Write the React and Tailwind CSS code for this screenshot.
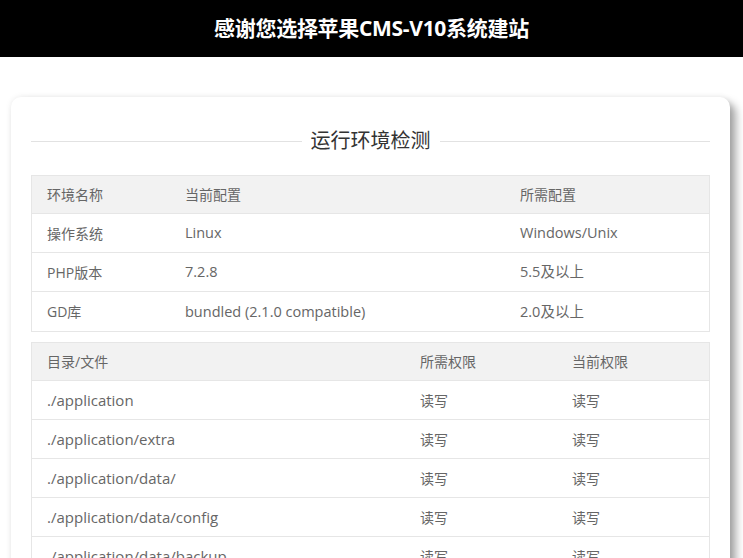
import React from "react";

const envRows = [
  ["操作系统", "Linux", "Windows/Unix"],
  ["PHP版本", "7.2.8", "5.5及以上"],
  ["GD库", "bundled (2.1.0 compatible)", "2.0及以上"],
];

const dirRows = [
  "./application",
  "./application/extra",
  "./application/data/",
  "./application/data/config",
  "./application/data/backup",
  "./application/data/update",
];

const App = () => {
  return (
    <div
      className="min-h-screen bg-white text-[#666]"
      style={{ fontFamily: '"Open Sans", "Noto Sans CJK SC", sans-serif' }}
    >
      {/* header */}
      <div className="h-[57px] bg-black flex items-center justify-center">
        <h1 className="text-white text-[21px] font-bold tracking-[-0.3px]">
          感谢您选择苹果CMS-V10系统建站
        </h1>
      </div>

      {/* card */}
      <div className="ml-[11px] mt-[40px] w-[719px] bg-white rounded-[10px] px-[20px] pt-[32px] pb-6 shadow-[0_0_6px_rgba(0,0,0,0.08),6px_6px_8px_rgba(0,0,0,0.35)]">
        <div className="flex items-center gap-[9px]">
          <div className="flex-1 h-px bg-[#e2e2e2]"></div>
          <h2 className="text-[20px] text-[#333] leading-[24px]">运行环境检测</h2>
          <div className="flex-1 h-px bg-[#e2e2e2]"></div>
        </div>

        {/* env table */}
        <div className="mt-[22px] border border-[#e6e6e6] text-[14px]">
          <div className="grid grid-cols-[138px_335px_1fr] h-[38px] items-center bg-[#f2f2f2] border-b border-[#e6e6e6]">
            <div className="pl-[15px]">环境名称</div>
            <div className="pl-[15px]">当前配置</div>
            <div className="pl-[15px]">所需配置</div>
          </div>
          {envRows.map((r, i) => (
            <div
              key={i}
              className={
                "grid grid-cols-[138px_335px_1fr] h-[39px] items-center " +
                (i < envRows.length - 1 ? "border-b border-[#e6e6e6]" : "")
              }
            >
              <div className="pl-[15px]">{r[0]}</div>
              <div className="pl-[15px] text-[14.5px]">{r[1]}</div>
              <div className="pl-[15px] text-[14.5px]">{r[2]}</div>
            </div>
          ))}
        </div>

        {/* dir table */}
        <div className="mt-[10px] border border-[#e6e6e6] text-[14px]">
          <div className="grid grid-cols-[373px_152px_1fr] h-[38px] items-center bg-[#f2f2f2] border-b border-[#e6e6e6]">
            <div className="pl-[15px]">目录/文件</div>
            <div className="pl-[15px]">所需权限</div>
            <div className="pl-[15px]">当前权限</div>
          </div>
          {dirRows.map((d, i) => (
            <div
              key={i}
              className="grid grid-cols-[373px_152px_1fr] h-[39px] items-center border-b border-[#e6e6e6] last:border-b-0"
            >
              <div className="pl-[15px] text-[15px]">{d}</div>
              <div className="pl-[15px]">读写</div>
              <div className="pl-[15px]">读写</div>
            </div>
          ))}
        </div>
      </div>
    </div>
  );
};

export default App;
